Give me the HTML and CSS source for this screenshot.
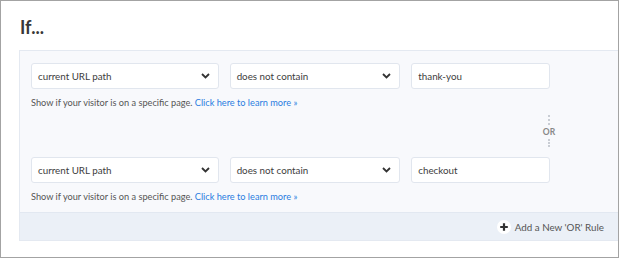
FILE: index.html
```html
<!DOCTYPE html>
<html>
<head>
<meta charset="utf-8">
<link rel="stylesheet" href="styles.css">
</head>
<body>
<div class="frame">
  <h1 class="title">If...</h1>
  <div class="panel">
    <div class="rules">
      <div class="rule">
        <div class="controls">
          <div class="select sel-field"><span>current URL path</span>
            <svg class="chev" width="9" height="6" viewBox="0 0 9 6"><path d="M1 1 L4.5 4.5 L8 1" fill="none" stroke="#333" stroke-width="1.8"/></svg>
          </div>
          <div class="select sel-op"><span>does not contain</span>
            <svg class="chev" width="9" height="6" viewBox="0 0 9 6"><path d="M1 1 L4.5 4.5 L8 1" fill="none" stroke="#333" stroke-width="1.8"/></svg>
          </div>
          <div class="input">thank-you</div>
        </div>
        <p class="help">Show if your visitor is on a specific page. <a class="link">Click here to learn more »</a></p>
      </div>
      <div class="or-wrap">
        <div class="or">
          <span class="dots dots-top"></span>
          <span class="or-text">OR</span>
          <span class="dots dots-bottom"></span>
        </div>
      </div>
      <div class="rule">
        <div class="controls">
          <div class="select sel-field"><span>current URL path</span>
            <svg class="chev" width="9" height="6" viewBox="0 0 9 6"><path d="M1 1 L4.5 4.5 L8 1" fill="none" stroke="#333" stroke-width="1.8"/></svg>
          </div>
          <div class="select sel-op"><span>does not contain</span>
            <svg class="chev" width="9" height="6" viewBox="0 0 9 6"><path d="M1 1 L4.5 4.5 L8 1" fill="none" stroke="#333" stroke-width="1.8"/></svg>
          </div>
          <div class="input">checkout</div>
        </div>
        <p class="help">Show if your visitor is on a specific page. <a class="link">Click here to learn more »</a></p>
      </div>
    </div>
    <div class="footer">
      <span class="plus">
        <svg width="14" height="14" viewBox="0 0 14 14"><circle cx="7" cy="7" r="7" fill="#fff"/><path d="M7 3.2 V10.8 M3.2 7 H10.8" stroke="#333" stroke-width="2.2"/></svg>
      </span>
      <span class="add-text">Add a New 'OR' Rule</span>
    </div>
  </div>
</div>
</body>
</html>
```

FILE: styles.css
```css
* { box-sizing: border-box; }
html, body { margin: 0; padding: 0; background: #fff; }
body { font-family: Lato, "Open Sans", Arial, sans-serif; color: #444; }

.frame {
  width: 619px;
  height: 258px;
  border: 1px solid #a3a3a3;
  overflow: hidden;
}

.title {
  margin: 0;
  padding: 15px 0 0 19px;
  height: 49px;
  font-size: 18px;
  line-height: 22px;
  font-weight: 700;
  color: #383838;
}

.panel {
  margin-left: 18px;
  background: #f8f9fc;
  border: 1px solid #e4e9f1;
  border-right: none;
}

.rules {
  padding: 12px 11px 9px 11px;
  width: 541px;
}

.controls {
  display: flex;
  gap: 11px;
  height: 26px;
}

.select, .input {
  background: #fff;
  border: 1px solid #e1e6ee;
  border-radius: 3px;
  height: 26px;
  display: flex;
  align-items: center;
  padding: 0 7px 0 6px;
  font-size: 9.8px;
  color: #3d3d3d;
}

.select { justify-content: space-between; }
.sel-field { width: 188px; }
.sel-op { width: 171px; }
.input { width: 139px; }

.chev { display: block; margin-right: 1px; }

.help {
  margin: 7px 0 0 0;
  font-size: 9.2px;
  line-height: 13px;
  color: #555;
}

.link { color: #2b7de0; text-decoration: none; }

.or-wrap {
  display: flex;
  justify-content: flex-end;
  height: 48px;
  width: 519px;
}

.or {
  width: 14px;
  margin-right: -6px;
  display: flex;
  flex-direction: column;
  align-items: center;
  padding-top: 6px;
}

.dots {
  width: 0;
  border-left: 2px dotted #c9cdd4;
}
.dots-top { height: 10px; }
.dots-bottom { height: 8px; }

.or-text {
  font-size: 8.5px;
  line-height: 14px;
  color: #888;
  font-weight: 700;
}

.footer {
  height: 28px;
  background: #ebf0f7;
  border-top: 1px solid #e2e8f1;
  display: flex;
  align-items: center;
  justify-content: flex-end;
  gap: 4px;
  padding-right: 14px;
}

.plus { display: flex; }
.plus svg { display: block; }

.add-text {
  font-size: 9.8px;
  color: #555;
}
```
